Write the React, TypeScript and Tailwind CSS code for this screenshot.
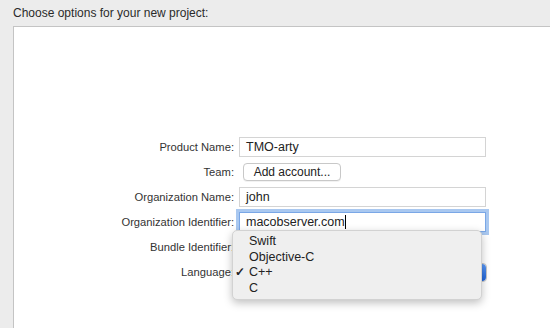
import React from "react";

const font = { fontFamily: '"Liberation Sans", Arial, sans-serif' };

function Field({ value, focused }: { value: string; focused?: boolean }) {
  return (
    <div
      className={
        "h-[20px] w-[247px] bg-white flex items-center pl-[6px] text-[12.5px] text-[#222] " +
        (focused
          ? "border border-[#7aa7e6] shadow-[0_0_0_3px_#a9c8f0]"
          : "border border-[#d4d4d4]")
      }
    >
      <span>{value}</span>
      {focused && <span className="w-px h-[14px] bg-black" />}
    </div>
  );
}

export default function App() {
  return (
    <div className="relative w-[550px] h-[328px] overflow-hidden bg-[#ececec] flex flex-col" style={font}>
      <div className="h-[26px] shrink-0 flex items-center pl-[13px] text-[12px] text-[#2a2a2a]">
        Choose options for your new project:
      </div>
      <div className="flex-1 ml-[13px] bg-white border-t border-l border-[#c4c4c4] pt-[110px]">
        <div className="grid grid-cols-[220px_250px] gap-x-[5px] gap-y-[5px] items-center text-[11.2px] text-[#333]">
          <div className="text-right h-[20px] leading-[20px]">Product Name:</div>
          <Field value="TMO-arty" />

          <div className="text-right h-[20px] leading-[20px]">Team:</div>
          <div className="h-[20px] flex items-center">
            <div className="ml-[4px] h-[18px] w-[98px] rounded-[4px] border border-[#c8c8c8] bg-white shadow-[0_1px_0_rgba(0,0,0,0.05)] flex items-center justify-center text-[12px] text-[#222]">
              Add account...
            </div>
          </div>

          <div className="text-right h-[20px] leading-[20px]">Organization Name:</div>
          <Field value="john" />

          <div className="text-right h-[20px] leading-[20px]">Organization Identifier:</div>
          <Field value="macobserver.com" focused />

          <div className="text-right h-[20px] leading-[20px]">Bundle Identifier:</div>
          <div className="h-[20px]" />

          <div className="text-right h-[20px] leading-[20px]">Language:</div>
          <div className="h-[20px] flex items-center">
            <div className="h-[19px] w-[248px] rounded-[4px] border border-[#c8c8c8] bg-white flex justify-end">
              <div className="w-[16px] h-full rounded-r-[4px] bg-gradient-to-b from-[#5a98f5] to-[#1e63d8]" />
            </div>
          </div>
        </div>
      </div>

      <div className="absolute left-[232px] top-[230px] w-[250px] h-[70px] rounded-[5px] bg-[#efefef] border border-[#d2d2d2] shadow-[0_3px_8px_rgba(0,0,0,0.25)] pt-[3px] text-[12.5px] text-[#222]">
        {["Swift", "Objective-C", "C++", "C"].map((t) => (
          <div key={t} className="h-[15.5px] leading-[15.5px] flex items-center">
            <span className="w-[16px] pr-[2px] text-center text-[12px] font-bold">{t === "C++" ? "✓" : ""}</span>
            <span>{t}</span>
          </div>
        ))}
      </div>
    </div>
  );
}
